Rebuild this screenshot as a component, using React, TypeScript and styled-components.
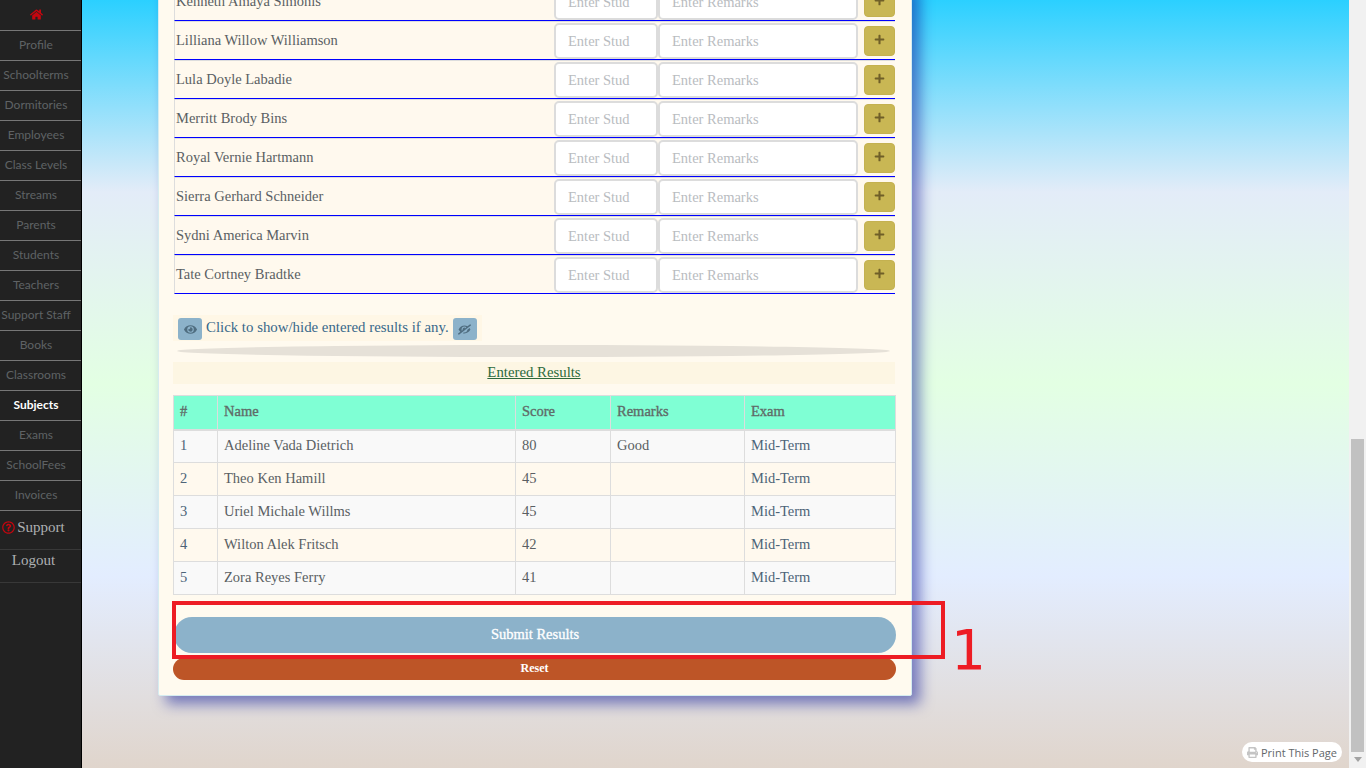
import React from "react";
import styled, { createGlobalStyle } from "styled-components";
import {
  FaEye,
  FaEyeSlash,
  FaHome,
  FaPlus,
  FaPrint,
  FaRegQuestionCircle,
} from "react-icons/fa";

const GlobalStyle = createGlobalStyle`
  html, body {
    margin: 0;
    padding: 0;
    overflow: hidden;
  }
  * {
    box-sizing: border-box;
  }
`;

const serif = `"Liberation Serif", "Times New Roman", serif`;

const Page = styled.div`
  position: relative;
  display: flex;
  width: 1366px;
  height: 768px;
  overflow: hidden;
  font-family: ${serif};
`;

const Sidebar = styled.nav`
  flex: 0 0 82px;
  padding-top: 1px;
  background: #222222;
  border-right: 1px solid #000;
`;

const NavItem = styled.a<{ $active?: boolean }>`
  display: flex;
  align-items: center;
  justify-content: center;
  height: 30px;
  padding: 0 9px 2px 0;
  border-bottom: 1px solid #777;
  font-family: Lato, sans-serif;
  font-size: 12px;
  font-weight: ${(p) => (p.$active ? 700 : 400)};
  color: ${(p) => (p.$active ? "#fff" : "#5f6265")};
`;

const HomeItem = styled(NavItem)`
  color: #c4060f;
  font-size: 13px;
`;

const BigNavItem = styled.a<{ $tall?: boolean }>`
  display: flex;
  align-items: center;
  justify-content: center;
  gap: 2px;
  height: ${(p) => (p.$tall ? 39 : 33)}px;
  padding-right: 14px;
  padding-bottom: ${(p) => (p.$tall ? 5 : 12)}px;
  border-bottom: 1px solid #383838;
  font-size: 15px;
  color: #aeb0b2;
`;

const SupportIcon = styled(FaRegQuestionCircle)`
  color: #c4060f;
  font-size: 13px;
`;

const Main = styled.main`
  flex: 1;
  display: flex;
  flex-direction: column;
  justify-content: flex-end;
  padding: 0 0 72px 76px;
  background: linear-gradient(
    to bottom,
    #2bd0ff 0%,
    #e3ecf8 25%,
    #e3ffe3 50%,
    #e3edff 75%,
    #e0d5cc 100%
  );
`;

const Card = styled.section`
  flex-shrink: 0;
  width: 754px;
  padding: 0 15px 15px 14px;
  background: #fffaef;
  border: 1px solid #d5ecf0;
  border-radius: 2px;
  box-shadow: 8px 8px 14px rgba(10, 20, 150, 0.5);
`;

const EntryRow = styled.div`
  display: flex;
  align-items: center;
  height: 39px;
  margin: 0 1px;
  background: #fff9ee;
  border-top: 1px solid #ddd;
  border-left: 1px solid #ddd;
  border-bottom: 1px solid #0000ff;
`;

const StudentName = styled.span`
  flex: 1;
  padding-left: 1px;
  font-size: 14.5px;
  color: #5a5f63;
`;

const EntryInput = styled.input<{ $width: number }>`
  width: ${(p) => p.$width}px;
  height: 36px;
  padding: 2px 12px 0;
  background: #fff;
  border: 2px solid #dcdcdc;
  border-radius: 5px;
  font-family: ${serif};
  font-size: 14.5px;

  &::placeholder {
    color: #b9bcbf;
  }
`;

const AddButton = styled.button`
  display: flex;
  align-items: center;
  justify-content: center;
  width: 31px;
  height: 30px;
  margin-left: 6px;
  padding: 0 0 3px;
  background: #c9b754;
  border: 1px solid #c4b150;
  border-radius: 4px;
  color: #6f5f28;
  font-size: 11px;
`;

const ToggleBar = styled.div`
  display: inline-flex;
  align-items: center;
  gap: 4px;
  height: 26px;
  margin-top: 21px;
  padding: 0 5px;
  background: #fff7e6;
  font-size: 14.85px;
  color: #38688a;
  vertical-align: top;
`;

const ToggleLabel = styled.span`
  padding-bottom: 2px;
`;

const EyeButton = styled.button<{ $flip?: boolean }>`
  display: flex;
  align-items: center;
  justify-content: center;
  width: 24px;
  height: 22px;
  margin-top: 2px;
  padding: 0;
  background: #8cb2ca;
  border: none;
  border-radius: 3px;
  color: #4f6d80;
  font-size: 13px;

  svg {
    transform: ${(p) => (p.$flip ? "scaleX(-1)" : "none")};
  }
`;

const Divider = styled.div`
  width: 713px;
  height: 12px;
  margin: 4px 0 5px 4px;
  background: #e6e1d8;
  border-radius: 50%;
`;

const SectionTitle = styled.div`
  height: 22px;
  margin: 0 1px 11px 0;
  background: #fdf6e3;
  text-align: center;
  font-size: 14.8px;
  line-height: 21px;
  color: #2c6a3c;
  text-decoration: underline;
`;

const ResultsTable = styled.table`
  width: 722px;
  table-layout: fixed;
  border-collapse: collapse;
  font-size: 14.5px;
  color: #5a5f63;
`;

const HeadCell = styled.th<{ $width: number }>`
  width: ${(p) => p.$width}px;
  height: 34px;
  padding: 0 6px 2px;
  background: #7fffd4;
  border: 1px solid #ddd;
  border-bottom-width: 2px;
  text-align: left;
  font-weight: 400;
  color: #5f6b68;
  -webkit-text-stroke: 0.35px #5f6b68;
`;

const BodyRow = styled.tr<{ $odd: boolean }>`
  background: ${(p) => (p.$odd ? "#f9f9f9" : "#fff9ee")};
`;

const BodyCell = styled.td<{ $blue?: boolean }>`
  height: 33px;
  padding: 0 6px 2px;
  border: 1px solid #ddd;
  color: ${(p) => (p.$blue ? "#4d6478" : "#5a5f63")};
`;

const SubmitButton = styled.button`
  display: block;
  width: 722px;
  height: 36px;
  margin: 22px 0 5px 1px;
  padding: 0 0 2px;
  background: #8cb2ca;
  border: none;
  border-radius: 18px;
  font-family: ${serif};
  font-size: 14.5px;
  color: #fff;
  -webkit-text-stroke: 0.3px #fff;
`;

const ResetButton = styled.button`
  display: block;
  width: 723px;
  height: 22px;
  padding: 0 0 2px;
  background: #bd5527;
  border: none;
  border-radius: 11px;
  font-family: ${serif};
  font-size: 12px;
  font-weight: 700;
  color: #fff;
`;

const Scrollbar = styled.div`
  flex: 0 0 17px;
  display: flex;
  flex-direction: column;
  align-items: center;
  justify-content: flex-end;
  background: #f1f1f1;
`;

const ScrollThumb = styled.div`
  width: 13px;
  height: 313px;
  background: #c1c1c1;
`;

const ScrollArrow = styled.div`
  width: 0;
  height: 0;
  margin: 5px 0 6px;
  border-left: 4px solid transparent;
  border-right: 4px solid transparent;
  border-top: 5px solid #a3a3a3;
`;

const PrintPill = styled.a`
  position: absolute;
  left: 1242px;
  top: 742px;
  display: flex;
  align-items: center;
  gap: 3px;
  height: 20px;
  padding: 0 5px;
  background: #fff;
  border-radius: 10px;
  font-family: "Open Sans", sans-serif;
  font-size: 11px;
  color: #62666a;
  white-space: nowrap;

  svg {
    color: #c4c4c4;
  }
`;

const Highlight = styled.div`
  position: absolute;
  left: 172px;
  top: 601px;
  width: 773px;
  height: 58px;
  border: 4px solid #ed1c24;
`;

const HighlightNumber = styled.span`
  position: absolute;
  left: 951px;
  top: 618px;
  font-family: "DejaVu Sans", sans-serif;
  font-size: 55px;
  line-height: 65px;
  color: #ed1c24;
`;

const navLinks = [
  "Profile",
  "Schoolterms",
  "Dormitories",
  "Employees",
  "Class Levels",
  "Streams",
  "Parents",
  "Students",
  "Teachers",
  "Support Staff",
  "Books",
  "Classrooms",
  "Subjects",
  "Exams",
  "SchoolFees",
  "Invoices",
];

const students = [
  "Kenneth Amaya Simonis",
  "Lilliana Willow Williamson",
  "Lula Doyle Labadie",
  "Merritt Brody Bins",
  "Royal Vernie Hartmann",
  "Sierra Gerhard Schneider",
  "Sydni America Marvin",
  "Tate Cortney Bradtke",
];

const results = [
  { name: "Adeline Vada Dietrich", score: 80, remarks: "Good" },
  { name: "Theo Ken Hamill", score: 45, remarks: "" },
  { name: "Uriel Michale Willms", score: 45, remarks: "" },
  { name: "Wilton Alek Fritsch", score: 42, remarks: "" },
  { name: "Zora Reyes Ferry", score: 41, remarks: "" },
];

const App: React.FC = () => {
  return (
    <Page>
      <GlobalStyle />
      <Sidebar>
        <HomeItem>
          <FaHome />
        </HomeItem>
        {navLinks.map((link) => (
          <NavItem key={link} $active={link === "Subjects"}>
            {link}
          </NavItem>
        ))}
        <BigNavItem $tall>
          <SupportIcon />
          Support
        </BigNavItem>
        <BigNavItem>Logout</BigNavItem>
      </Sidebar>

      <Main>
        <Card>
          {students.map((student) => (
            <EntryRow key={student}>
              <StudentName>{student}</StudentName>
              <EntryInput $width={104} placeholder="Enter Stud" />
              <EntryInput $width={200} placeholder="Enter Remarks" />
              <AddButton>
                <FaPlus />
              </AddButton>
            </EntryRow>
          ))}

          <ToggleBar>
            <EyeButton>
              <FaEye />
            </EyeButton>
            <ToggleLabel>Click to show/hide entered results if any.</ToggleLabel>
            <EyeButton $flip>
              <FaEyeSlash />
            </EyeButton>
          </ToggleBar>
          <Divider />
          <SectionTitle>Entered Results</SectionTitle>

          <ResultsTable>
            <thead>
              <tr>
                <HeadCell $width={44}>#</HeadCell>
                <HeadCell $width={298}>Name</HeadCell>
                <HeadCell $width={95}>Score</HeadCell>
                <HeadCell $width={134}>Remarks</HeadCell>
                <HeadCell $width={151}>Exam</HeadCell>
              </tr>
            </thead>
            <tbody>
              {results.map((result, index) => (
                <BodyRow key={result.name} $odd={index % 2 === 0}>
                  <BodyCell $blue>{index + 1}</BodyCell>
                  <BodyCell>{result.name}</BodyCell>
                  <BodyCell>{result.score}</BodyCell>
                  <BodyCell>{result.remarks}</BodyCell>
                  <BodyCell $blue>Mid-Term</BodyCell>
                </BodyRow>
              ))}
            </tbody>
          </ResultsTable>

          <SubmitButton>Submit Results</SubmitButton>
          <ResetButton>Reset</ResetButton>
        </Card>
      </Main>

      <Scrollbar>
        <ScrollThumb />
        <ScrollArrow />
      </Scrollbar>

      <PrintPill>
        <FaPrint />
        Print This Page
      </PrintPill>
      <Highlight />
      <HighlightNumber>1</HighlightNumber>
    </Page>
  );
};

export default App;
